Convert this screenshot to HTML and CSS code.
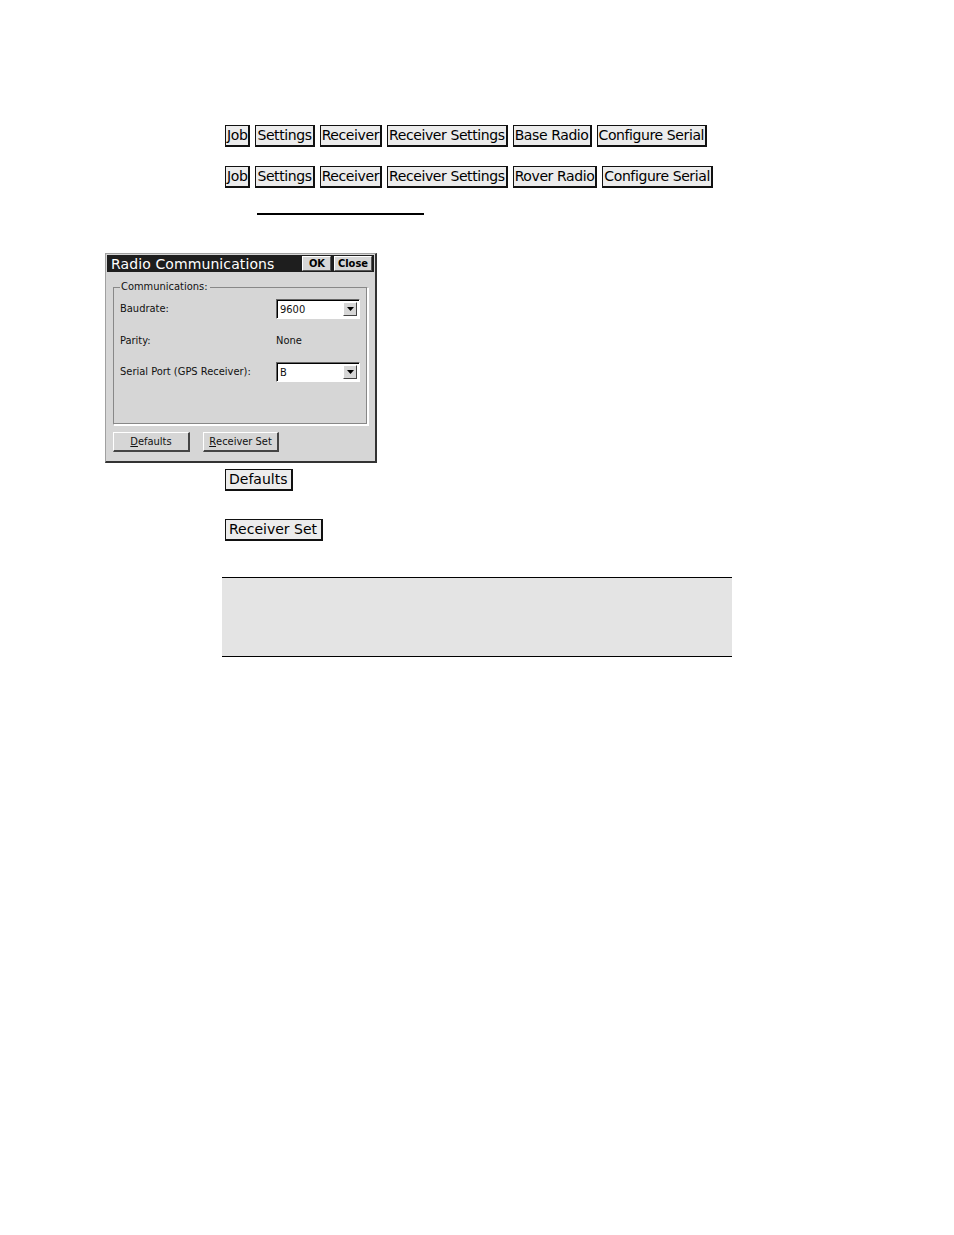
FILE: index.html
```html
<!DOCTYPE html>
<html>
<head>
<meta charset="utf-8">
<link rel="stylesheet" href="styles.css">
</head>
<body>
<div class="page">
  <div class="crumbs">
    <span class="btn">Job</span>
    <span class="btn">Settings</span>
    <span class="btn">Receiver</span>
    <span class="btn">Receiver Settings</span>
    <span class="btn">Base Radio</span>
    <span class="btn">Configure Serial</span>
  </div>
  <div class="crumbs second">
    <span class="btn">Job</span>
    <span class="btn">Settings</span>
    <span class="btn">Receiver</span>
    <span class="btn">Receiver Settings</span>
    <span class="btn">Rover Radio</span>
    <span class="btn">Configure Serial</span>
  </div>
  <div class="rule"></div>

  <div class="dialog">
    <div class="titlebar">
      <span class="title">Radio Communications</span>
      <span class="tbtns"><span class="tbtn ok">OK</span><span class="tbtn">Close</span></span>
    </div>
    <div class="dbody">
      <fieldset class="group">
        <legend>Communications:</legend>
        <div class="frow r1">
          <span class="lbl">Baudrate:</span>
          <span class="combo"><span class="cval">9600</span><span class="carrow"><svg width="7" height="4" viewBox="0 0 7 4"><path d="M0 0h7L3.5 4z" fill="#000"/></svg></span></span>
        </div>
        <div class="frow r2">
          <span class="lbl">Parity:</span>
          <span class="val">None</span>
        </div>
        <div class="frow r3">
          <span class="lbl">Serial Port (GPS Receiver):</span>
          <span class="combo"><span class="cval">B</span><span class="carrow"><svg width="7" height="4" viewBox="0 0 7 4"><path d="M0 0h7L3.5 4z" fill="#000"/></svg></span></span>
        </div>
      </fieldset>
      <div class="dbtns">
        <span class="pbtn w1"><u>D</u>efaults</span>
        <span class="pbtn w2"><u>R</u>eceiver Set</span>
      </div>
    </div>
  </div>

  <div class="single first"><span class="btn">Defaults</span></div>
  <div class="single"><span class="btn">Receiver Set</span></div>

  <div class="note"></div>
</div>
</body>
</html>
```

FILE: styles.css
```css
html, body {
  margin: 0;
  padding: 0;
  background: #fff;
}
.page {
  padding-top: 125px;
  font-family: "DejaVu Sans", sans-serif;
}
.crumbs {
  display: flex;
  gap: 5px;
  margin-left: 225px;
  height: 22px;
}
.crumbs.second {
  margin-top: 19px;
}
.btn {
  display: inline-block;
  box-sizing: border-box;
  height: 22px;
  line-height: 19px;
  padding: 0 1px 0 1px;
  background: #ececec;
  border: 1px solid #111;
  border-right-width: 2px;
  border-bottom-width: 2px;
  font-size: 14px;
  letter-spacing: -0.4px;
  color: #000;
  white-space: nowrap;
}
.rule {
  margin: 25px 0 0 257px;
  width: 167px;
  height: 2px;
  background: #000;
}
.dialog {
  margin: 38px 0 0 105px;
  width: 272px;
  height: 210px;
  box-sizing: border-box;
  background: #d6d6d6;
  border: 1px solid #a0a0a0;
  border-right: 2px solid #333;
  border-bottom: 2px solid #333;
  font-family: "DejaVu Sans Condensed", "DejaVu Sans", sans-serif;
  font-size: 11px;
  color: #111;
}
.titlebar {
  height: 17px;
  background: #1e1e1e;
  display: flex;
  align-items: center;
  justify-content: space-between;
  padding: 0 2px 0 4px;
  margin: 1px 1px 0 1px;
}
.title {
  color: #fff;
  font-size: 14px;
  letter-spacing: 0.1px;
  font-family: "DejaVu Sans", sans-serif;
}
.tbtns {
  display: flex;
  gap: 3px;
}
.tbtn {
  background: #d6d6d6;
  color: #000;
  font-size: 11px;
  font-weight: bold;
  font-family: "DejaVu Sans Condensed", sans-serif;
  height: 13px;
  line-height: 13px;
  padding: 0 3px;
  border: 1px solid #fff;
  border-right-color: #555;
  border-bottom-color: #555;
  box-sizing: content-box;
}
.tbtn.ok {
  width: 15px;
  padding: 0 6px;
  text-align: center;
}
.dbody {
  padding: 9px 7px 0 7px;
}
.group {
  margin: 0;
  padding: 0 0 0 6px;
  height: 144px;
  box-sizing: border-box;
  border: 1px solid #fff;
  border-top-color: #888;
  border-left-color: #888;
  box-shadow: inset -1px -1px 0 #888, 1px 1px 0 #fff;
  min-width: 0;
}
.group legend {
  padding: 0 2px 0 1px;
  margin-left: 0;
  font-size: 11px;
  line-height: 12px;
}
.frow {
  display: flex;
  align-items: center;
  height: 21px;
}
.r1 { margin-top: 5px; }
.r2 { margin-top: 11px; }
.r3 { margin-top: 10px; }
.lbl {
  width: 156px;
}
.combo {
  display: flex;
  width: 84px;
  height: 20px;
  box-sizing: border-box;
  background: #fff;
  border: 1px solid #666;
  border-right-color: #fff;
  border-bottom-color: #fff;
  box-shadow: inset 1px 1px 0 #000;
}
.cval {
  flex: 1;
  padding: 3px 0 0 3px;
  font-size: 11px;
}
.carrow {
  width: 14px;
  margin: 2px 2px 2px 0;
  box-sizing: border-box;
  background: #d6d6d6;
  border: 1px solid #fff;
  border-right-color: #444;
  border-bottom-color: #444;
  display: flex;
  align-items: center;
  justify-content: center;
}
.dbtns {
  display: flex;
  gap: 13px;
  margin-top: 7px;
}
.pbtn {
  height: 20px;
  box-sizing: border-box;
  display: flex;
  align-items: center;
  justify-content: center;
  border: 1px solid #fff;
  border-right: 2px solid #444;
  border-bottom: 2px solid #444;
  background: #d6d6d6;
  font-size: 11px;
}
.w1 { width: 77px; }
.w2 { width: 76px; }
.single {
  margin: 6px 0 0 225px;
}
.single + .single {
  margin-top: 28px;
}
.single .btn {
  letter-spacing: 0;
  padding: 0 4px 0 3px;
}
.note {
  margin: 36px 0 0 222px;
  width: 510px;
  height: 78px;
  background: #e4e4e4;
  border-top: 1px solid #000;
  border-bottom: 1px solid #000;
}
```
